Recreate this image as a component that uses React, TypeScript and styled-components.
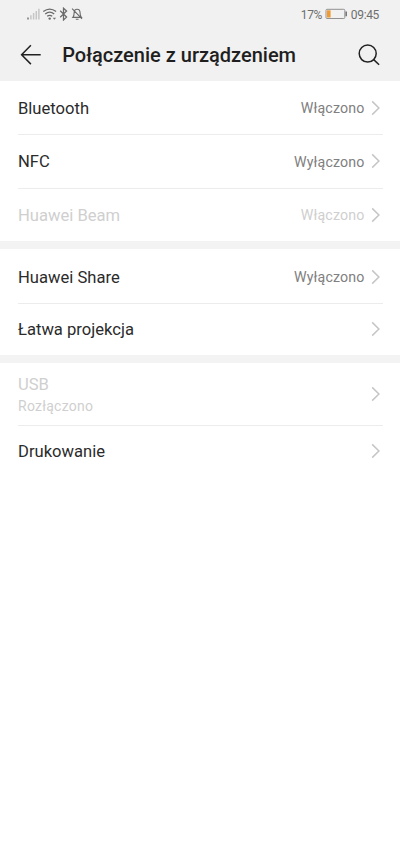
import React from "react";
import styled, { createGlobalStyle } from "styled-components";

const GlobalStyle = createGlobalStyle`
  * { box-sizing: border-box; }
  body { margin: 0; background: #fff; font-family: Roboto, sans-serif; }
`;

const Screen = styled.main`
  width: 400px;
  height: 867px;
  overflow: hidden;
  background: #fff;
`;

const Top = styled.header`
  height: 81px;
  background: #f1f1f1;
`;

const StatusBar = styled.div`
  height: 28px;
  padding: 0 21px 0 26px;
  display: flex;
  align-items: center;
  justify-content: space-between;
  color: #6e6e6e;
  font-size: 12px;
`;

const StatusGroup = styled.div`
  display: flex;
  align-items: center;
  svg { display: block; }
`;

const Percent = styled.span`
  margin: 1px 3px 0 0;
  letter-spacing: -0.4px;
`;

const Clock = styled.span`
  margin: 1px 0 0 3px;
  letter-spacing: -0.35px;
`;

const TitleBar = styled.div`
  height: 53px;
  padding: 0 19px 0 19px;
  display: flex;
  align-items: center;
`;

const IconButton = styled.button`
  display: flex;
  padding: 0;
  border: 0;
  background: none;
  color: #222;
`;

const Title = styled.h1`
  flex: 1;
  margin: 1px 0 0 19.2px;
  font-size: 20px;
  line-height: 28px;
  font-weight: 500;
  color: #1f1f1f;
  white-space: nowrap;
`;

const Group = styled.section`
  & + & { border-top: 8px solid #f3f3f3; }
`;

const Row = styled.div<{ $height: number; $inset?: number; $disabled?: boolean }>`
  height: ${(p) => p.$height}px;
  margin: 0 17px 0 18px;
  padding: ${(p) => p.$inset ?? 0}px 2px 0 0;
  display: flex;
  align-items: center;
  color: ${(p) => (p.$disabled ? "#cfcfcf" : "#2b2b2b")};
  & + & { border-top: 1px solid #ececec; }
`;

const Labels = styled.div`
  flex: 1;
`;

const Label = styled.div`
  font-size: 16.6px;
  line-height: 22px;
`;

const Caption = styled.div`
  font-size: 14px;
  line-height: 20px;
  letter-spacing: 0.25px;
`;

const Value = styled.span<{ $disabled?: boolean }>`
  margin: 0 6.5px 1px 0;
  font-size: 14.2px;
  line-height: 20px;
  letter-spacing: 0.15px;
  color: ${(p) => (p.$disabled ? "#cfcfcf" : "#808080")};
`;

const ChevronIcon = styled.svg`
  display: block;
  margin-bottom: 2px;
`;

const StatusIcons = () => (
  <svg width="58" height="14" viewBox="26 7 58 14" fill="none">
    <path d="M28 17.5v2" stroke="#777" strokeWidth="1.5" />
    <path d="M30.9 15.3v4.2M33.6 13v6.5M36.3 11v8.5M38.9 8.7v10.8" stroke="#c6c6c6" strokeWidth="1.5" />
    <g stroke="#6a6a6a" strokeWidth="1.3">
      <path d="M43.3 11.6q6.4-5 12.8 0M45.2 14q4.5-3.6 9 0M47.2 16.3q2.5-2 5 0" />
      <path d="M60.2 10.8l6.4 6.3-3.1 2.9V8.2l3.1 2.8-6.4 6.2" strokeWidth="1.25" />
      <path d="M72.9 17.4c1.1-1.1 1.2-2 1.2-4.3 0-2.4 1.1-3.9 3-3.9s3 1.5 3 3.9c0 2.3.2 3.2 1.3 4.3zM75.8 19.3h2.7M72.1 8.6l9.9 10.2" strokeWidth="1.1" />
    </g>
    <circle cx="49.7" cy="18.6" r="1.2" fill="#6a6a6a" />
    <path d="M52.7 17.8h3.4l-1.7 1.9z" fill="#777" />
  </svg>
);

const Battery = () => (
  <svg width="23" height="12" viewBox="0 0 23 12" fill="none">
    <rect x="1" y="1.3" width="18.8" height="9.2" rx="1" stroke="#929292" />
    <path d="M2 2.3h3.6v7.2H2z" fill="#ef9b31" />
    <path d="M21.2 3.6v4.7" stroke="#707070" strokeWidth="1.5" />
  </svg>
);

const Chevron = () => (
  <ChevronIcon width="10" height="16" viewBox="0 0 10 16" fill="none">
    <path d="M1.2 1.4L7.9 8l-6.7 6.6" stroke="#c5c5c5" strokeWidth="1.5" />
  </ChevronIcon>
);

type Item = {
  label: string;
  height: number;
  inset?: number;
  value?: string;
  caption?: string;
  disabled?: boolean;
};

const groups: Item[][] = [
  [
    { label: "Bluetooth", height: 53, inset: 2, value: "Włączono" },
    { label: "NFC", height: 54, inset: 1, value: "Wyłączono" },
    { label: "Huawei Beam", height: 53, inset: 1, value: "Włączono", disabled: true },
  ],
  [
    { label: "Huawei Share", height: 54, inset: 3, value: "Wyłączono" },
    { label: "Łatwa projekcja", height: 52, inset: 1 },
  ],
  [
    { label: "USB", height: 62, inset: 2, caption: "Rozłączono", disabled: true },
    { label: "Drukowanie", height: 52, inset: 1 },
  ],
];

export default function App() {
  return (
    <Screen>
      <GlobalStyle />
      <Top>
        <StatusBar>
          <StatusGroup><StatusIcons /></StatusGroup>
          <StatusGroup><Percent>17%</Percent><Battery /><Clock>09:45</Clock></StatusGroup>
        </StatusBar>
        <TitleBar>
          <IconButton aria-label="Wstecz">
            <svg width="24" height="24" viewBox="0 0 24 24" fill="none" stroke="currentColor" strokeWidth="1.5">
              <path d="M11.9 2.3L2.6 11.8l9.3 9.3M2.6 11.8h19.1" />
            </svg>
          </IconButton>
          <Title>Połączenie z urządzeniem</Title>
          <IconButton aria-label="Szukaj">
            <svg width="24" height="24" viewBox="0 0 24 24" fill="none" stroke="currentColor" strokeWidth="1.5">
              <circle cx="10.7" cy="10.6" r="8.5" />
              <path d="M16.7 16.6l5.4 5.2" />
            </svg>
          </IconButton>
        </TitleBar>
      </Top>
      {groups.map((items) => (
        <Group key={items[0].label}>
          {items.map((item) => (
            <Row key={item.label} $height={item.height} $inset={item.inset} $disabled={item.disabled}>
              <Labels>
                <Label>{item.label}</Label>
                {item.caption && <Caption>{item.caption}</Caption>}
              </Labels>
              {item.value && <Value $disabled={item.disabled}>{item.value}</Value>}
              <Chevron />
            </Row>
          ))}
        </Group>
      ))}
    </Screen>
  );
}
